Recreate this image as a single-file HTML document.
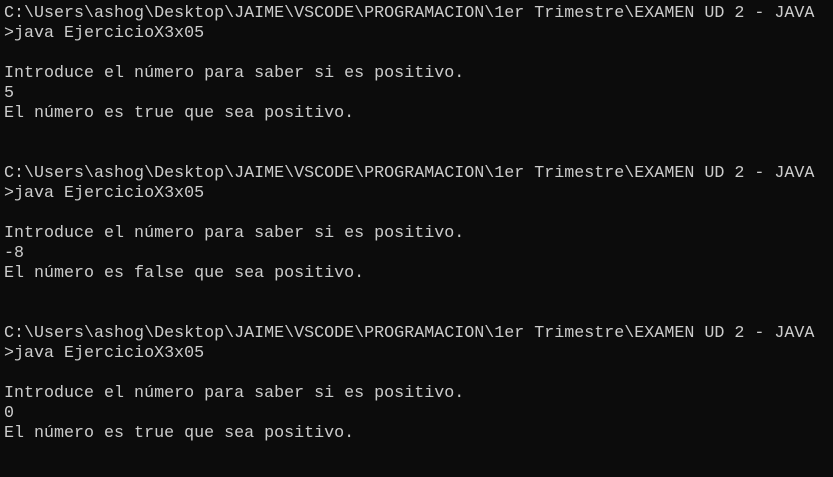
<!DOCTYPE html>
<html><head><style>
html,body{margin:0;padding:0;background:#0c0c0c;width:833px;height:477px;overflow:hidden}
pre{margin:0;padding:4px 0 0 4px;font-family:"Liberation Mono","DejaVu Sans Mono",monospace;font-size:16.68px;line-height:20px;color:#cccccc;white-space:pre}
</style></head><body><pre>C:\Users\ashog\Desktop\JAIME\VSCODE\PROGRAMACION\1er Trimestre\EXAMEN UD 2 - JAVA
>java EjercicioX3x05

Introduce el número para saber si es positivo.
5
El número es true que sea positivo.


C:\Users\ashog\Desktop\JAIME\VSCODE\PROGRAMACION\1er Trimestre\EXAMEN UD 2 - JAVA
>java EjercicioX3x05

Introduce el número para saber si es positivo.
-8
El número es false que sea positivo.


C:\Users\ashog\Desktop\JAIME\VSCODE\PROGRAMACION\1er Trimestre\EXAMEN UD 2 - JAVA
>java EjercicioX3x05

Introduce el número para saber si es positivo.
0
El número es true que sea positivo.</pre></body></html>
